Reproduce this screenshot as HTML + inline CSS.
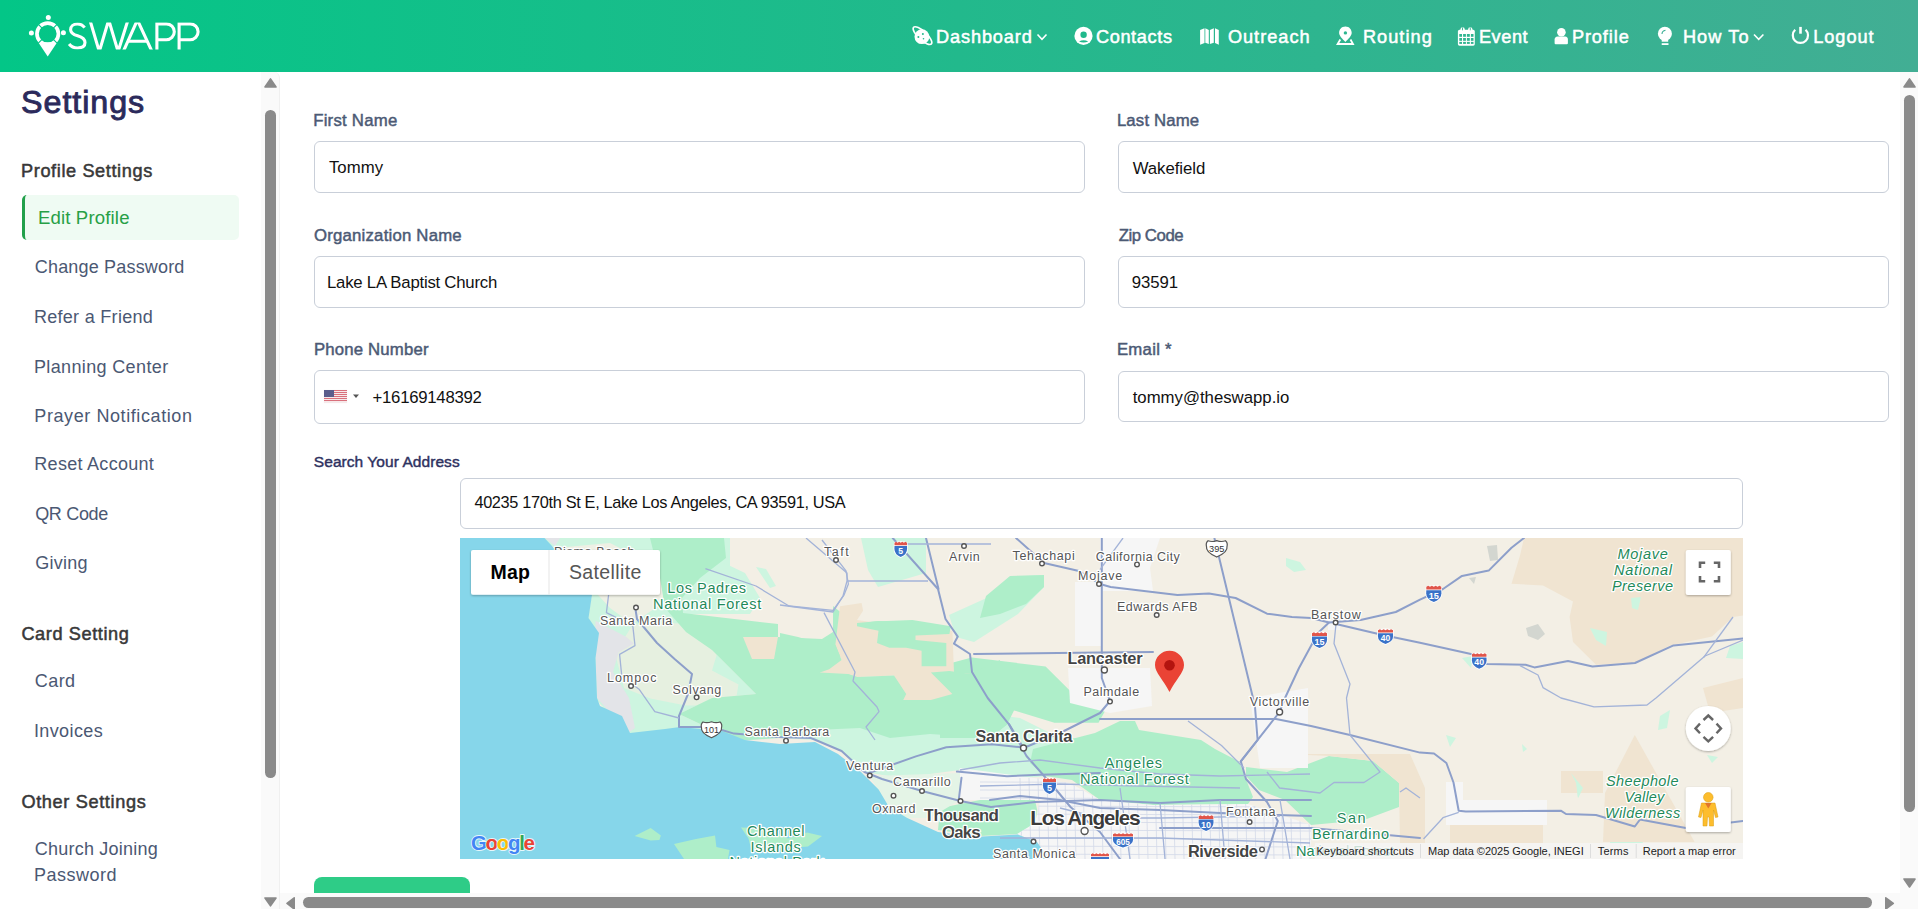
<!DOCTYPE html>
<html><head><meta charset="utf-8">
<style>
*{margin:0;padding:0;box-sizing:border-box}
html,body{width:1918px;height:909px;overflow:hidden;background:#fff;font-family:"Liberation Sans",sans-serif}
.a{position:absolute}
.t{position:absolute;white-space:nowrap;line-height:1}
.inp{position:absolute;border:1px solid #c9cfd9;border-radius:6px;background:#fff}
</style></head><body>
<div class="a" style="left:0;top:0;width:1918px;height:72px;background:linear-gradient(90deg,#03c687 0%,#22b98c 50%,#42ae94 100%)"></div>
<!--LOGO-->
<svg class="a" style="left:0;top:0" width="1918" height="72" viewBox="0 0 1918 72">
<g fill="#fff">
<!-- logo -->
<circle cx="48.3" cy="17.5" r="2.5"/>
<circle cx="31.4" cy="33" r="2.5"/>
<circle cx="63.4" cy="32.8" r="2.5"/>
<path d="M38.2,42.2 L57.2,42.2 L47.7,56.4 Z"/>
<circle cx="47.7" cy="33.8" r="10.75" fill="none" stroke="#fff" stroke-width="3.7"/>
<path d="M41.83,27.93 L38.30,24.40 M53.57,27.93 L57.10,24.40 M53.57,39.67 L57.10,43.20 M41.83,39.67 L38.30,43.20" stroke="#05c588" stroke-width="1.1"/>
<defs><clipPath id="lgc"><rect x="60" y="22.4" width="150" height="27.2"/></clipPath></defs>
<g clip-path="url(#lgc)" fill="none" stroke="#fff" stroke-width="3.1" stroke-linejoin="miter">
<path d="M84.6,27.6 C82.8,25 80.2,24 77.3,24 C73.2,24 70.6,26.4 70.6,29.7 C70.6,33.2 73.6,34.6 77.6,35.8 C82,37.1 85,39 85,42.6 C85,46.1 82,48 77.6,48 C74.1,48 71.1,46.6 69.1,44"/>
<path d="M89.9,20 L99.3,51.5 L108.7,20 L118.1,51.5 L128,20"/>
<path d="M123.3,51.5 L137.4,20 L152,51.5"/>
<path d="M128.3,41.3 H146.7"/>
<path d="M156.9,51.5 V23.9 H166.4 A7.9,7.9 0 0 1 166.4,39.7 H156.9"/>
<path d="M179.1,51.5 V23.9 H190.2 A7.9,7.9 0 0 1 190.2,39.7 H179.1"/>
</g>
<!-- dashboard -->
<circle cx="921.9" cy="36.7" r="7.4"/>
<ellipse cx="922.5" cy="35.6" rx="12.2" ry="4.2" transform="rotate(43 922.5 35.6)" fill="none" stroke="#fff" stroke-width="1.6"/>
<circle cx="922.9" cy="34" r="1" fill="#22b98c"/><circle cx="918.4" cy="36.9" r="1" fill="#22b98c"/><circle cx="923.5" cy="38.8" r="0.8" fill="#22b98c"/>
<path d="M1037.5,34.5 L1042,39.3 L1046.5,34.5" fill="none" stroke="#fff" stroke-width="1.6"/>
<!-- contacts -->
<circle cx="1083.5" cy="35.9" r="9.1"/>
<circle cx="1083.6" cy="34.8" r="3.2" fill="#20b98c"/>
<path d="M1079,41.5 Q1083.6,38.8 1088.2,41.5 Q1083.6,43.6 1079,41.5 Z" fill="#20b98c"/>
<!-- outreach -->
<polygon points="1200.1,30 1204.5,28.2 1204.5,43 1200.1,44.8"/>
<polygon points="1205.3,28.2 1208.8,30 1208.8,44 1205.3,42.8"/>
<polygon points="1209.9,30 1213.8,28.2 1213.8,42.8 1209.9,44"/>
<polygon points="1215,28.2 1218.8,30 1218.8,44.8 1215,43"/>
<!-- routing -->
<path d="M1345.4,26.5 C1341.5,26.5 1339.1,29.5 1339.1,32.8 C1339.1,36 1342.5,39 1345.4,42 C1348.3,39 1351.7,36 1351.7,32.8 C1351.7,29.5 1349.3,26.5 1345.4,26.5 Z"/>
<circle cx="1345.4" cy="32.9" r="1.7" fill="#2db68f"/>
<path d="M1340.3,39.5 L1337.6,44 L1353,44 L1350.5,39.5" fill="none" stroke="#fff" stroke-width="1.8"/>
<!-- event -->
<rect x="1457.9" y="29.8" width="16.9" height="15.9" rx="1.6"/>
<circle cx="1462.6" cy="29.4" r="2.2"/><circle cx="1470.3" cy="29.4" r="2.2"/>
<rect x="1462.1" y="27.5" width="0.9" height="2.8" fill="#30b591"/><rect x="1469.8" y="27.5" width="0.9" height="2.8" fill="#30b591"/>
<g fill="#30b591">
<rect x="1459.3" y="34" width="2.7" height="2.8"/><rect x="1463.1" y="34" width="2.8" height="2.8"/><rect x="1466.9" y="34" width="2.9" height="2.8"/><rect x="1470.9" y="34" width="2.6" height="2.8"/>
<rect x="1459.3" y="38" width="2.7" height="2.8"/><rect x="1463.1" y="38" width="2.8" height="2.8"/><rect x="1466.9" y="38" width="2.9" height="2.8"/><rect x="1470.9" y="38" width="2.6" height="2.8"/>
<rect x="1459.3" y="41.9" width="2.7" height="2"/><rect x="1463.1" y="41.9" width="2.8" height="2"/><rect x="1466.9" y="41.9" width="2.9" height="2"/><rect x="1470.9" y="41.9" width="2.6" height="2"/>
</g>
<!-- profile -->
<circle cx="1561.4" cy="32.2" r="4.3"/>
<path d="M1557.6,36.4 L1565.2,36.4 Q1567.9,36.6 1567.9,39.5 L1567.9,43.2 Q1567.9,44.3 1566.8,44.3 L1555.7,44.3 Q1554.6,44.3 1554.6,43.2 L1554.6,39.5 Q1554.6,36.6 1557.6,36.4 Z"/>
<!-- how to -->
<circle cx="1664.9" cy="33.8" r="7"/>
<rect x="1661.7" y="38.5" width="6.5" height="3.2"/>
<rect x="1661.7" y="43.2" width="6.8" height="1.8"/>
<path d="M1662,34 Q1662,31 1665.5,30.3" fill="none" stroke="#3aae94" stroke-width="1.1"/>
<path d="M1754,34.5 L1758.7,39.3 L1763.4,34.5" fill="none" stroke="#fff" stroke-width="1.6"/>
<!-- logout -->
<path d="M1795.2,29.8 A7.6,7.6 0 1 0 1805.6,29.8" fill="none" stroke="#fff" stroke-width="2.2"/>
<rect x="1799.2" y="26.9" width="2.6" height="6.8"/>
</g>
</svg>


<!-- sidebar -->
<div class="a" style="left:22px;top:195px;width:217px;height:45px;background:#effbf3;border-left:3px solid #22a04b;border-radius:5px"></div>
<div class="a" style="left:260.8px;top:72px;width:19.2px;height:837px;background:#fafafa;border-right:1.4px solid #f0f0f0;border-top-right-radius:6px"></div>

<!-- form -->
<div class="inp" style="left:314px;top:141px;width:771px;height:52px"></div>
<div class="inp" style="left:1118px;top:141px;width:771px;height:52px"></div>
<div class="inp" style="left:314px;top:256px;width:771px;height:52px"></div>
<div class="inp" style="left:1118px;top:256px;width:771px;height:52px"></div>
<div class="inp" style="left:314px;top:370px;width:771px;height:54px"></div>
<div class="inp" style="left:1118px;top:371px;width:771px;height:51px"></div>
<div class="inp" style="left:460px;top:478px;width:1283px;height:51px"></div>
<div class="a" style="left:323.5px;top:390.4px;width:23.5px;height:12.5px;background:repeating-linear-gradient(180deg,#d9707c 0px,#d9707c 0.96px,#f6e9ea 0.96px,#f6e9ea 1.92px);box-shadow:0 0 0.5px rgba(0,0,0,.3)"></div>
<div class="a" style="left:323.5px;top:390.4px;width:10.5px;height:6.7px;background:#5a5d8c"></div>
<svg class="a" style="left:352px;top:393px" width="8" height="7"><polygon points="1,1.5 7,1.5 4,5" fill="#555"/></svg>
<div class="t" style="left:935.9px;top:27.6px;font-size:18.16px;-webkit-text-stroke:0.51px #fff;letter-spacing:0.90px;color:#fff">Dashboard</div>
<div class="t" style="left:1095.9px;top:27.6px;font-size:18.16px;-webkit-text-stroke:0.51px #fff;letter-spacing:0.64px;color:#fff">Contacts</div>
<div class="t" style="left:1227.9px;top:27.6px;font-size:18.16px;-webkit-text-stroke:0.51px #fff;letter-spacing:1.00px;color:#fff">Outreach</div>
<div class="t" style="left:1362.9px;top:27.6px;font-size:18.16px;-webkit-text-stroke:0.51px #fff;letter-spacing:1.05px;color:#fff">Routing</div>
<div class="t" style="left:1478.9px;top:27.6px;font-size:18.16px;-webkit-text-stroke:0.51px #fff;letter-spacing:0.58px;color:#fff">Event</div>
<div class="t" style="left:1571.9px;top:27.6px;font-size:18.16px;-webkit-text-stroke:0.51px #fff;letter-spacing:0.90px;color:#fff">Profile</div>
<div class="t" style="left:1682.9px;top:27.6px;font-size:18.16px;-webkit-text-stroke:0.51px #fff;letter-spacing:1.08px;color:#fff">How To</div>
<div class="t" style="left:1813.2px;top:27.6px;font-size:18.16px;-webkit-text-stroke:0.51px #fff;letter-spacing:0.97px;color:#fff">Logout</div>
<div class="t" style="left:21.1px;top:85.9px;font-size:32.26px;-webkit-text-stroke:0.90px #2b2a5b;letter-spacing:0.93px;color:#2b2a5b">Settings</div>
<div class="t" style="left:21.0px;top:161.6px;font-size:18.16px;-webkit-text-stroke:0.51px #383838;letter-spacing:0.61px;color:#383838">Profile Settings</div>
<div class="t" style="left:37.9px;top:209.3px;font-size:18.58px;letter-spacing:0.16px;color:#27a046">Edit Profile</div>
<div class="t" style="left:34.8px;top:258.2px;font-size:18.02px;letter-spacing:0.17px;color:#4b5873">Change Password</div>
<div class="t" style="left:33.9px;top:308.2px;font-size:18.02px;letter-spacing:0.29px;color:#4b5873">Refer a Friend</div>
<div class="t" style="left:33.9px;top:357.6px;font-size:18.02px;letter-spacing:0.36px;color:#4b5873">Planning Center</div>
<div class="t" style="left:34.3px;top:406.7px;font-size:18.02px;letter-spacing:0.58px;color:#4b5873">Prayer Notification</div>
<div class="t" style="left:34.3px;top:455.0px;font-size:18.02px;letter-spacing:0.28px;color:#4b5873">Reset Account</div>
<div class="t" style="left:35.2px;top:504.5px;font-size:18.02px;letter-spacing:-0.33px;color:#4b5873">QR Code</div>
<div class="t" style="left:35.2px;top:554.0px;font-size:18.02px;letter-spacing:0.25px;color:#4b5873">Giving</div>
<div class="t" style="left:21.4px;top:624.6px;font-size:18.16px;-webkit-text-stroke:0.51px #383838;letter-spacing:0.59px;color:#383838">Card Setting</div>
<div class="t" style="left:34.8px;top:671.9px;font-size:18.02px;letter-spacing:0.42px;color:#4b5873">Card</div>
<div class="t" style="left:33.9px;top:721.9px;font-size:18.02px;letter-spacing:0.39px;color:#4b5873">Invoices</div>
<div class="t" style="left:21.4px;top:792.7px;font-size:18.16px;-webkit-text-stroke:0.51px #383838;letter-spacing:0.64px;color:#383838">Other Settings</div>
<div class="t" style="left:34.8px;top:839.9px;font-size:18.02px;letter-spacing:0.21px;color:#4b5873">Church Joining</div>
<div class="t" style="left:33.9px;top:865.9px;font-size:18.02px;letter-spacing:0.51px;color:#4b5873">Password</div>
<div class="t" style="left:313.2px;top:113.0px;font-size:16.76px;-webkit-text-stroke:0.47px #4c5a75;letter-spacing:0.24px;color:#4c5a75">First Name</div>
<div class="t" style="left:1116.9px;top:113.0px;font-size:16.76px;-webkit-text-stroke:0.47px #4c5a75;letter-spacing:0.16px;color:#4c5a75">Last Name</div>
<div class="t" style="left:314.0px;top:227.5px;font-size:16.76px;-webkit-text-stroke:0.47px #4c5a75;letter-spacing:0.21px;color:#4c5a75">Organization Name</div>
<div class="t" style="left:1118.7px;top:227.5px;font-size:16.76px;-webkit-text-stroke:0.47px #4c5a75;letter-spacing:-0.44px;color:#4c5a75">Zip Code</div>
<div class="t" style="left:313.9px;top:341.7px;font-size:16.76px;-webkit-text-stroke:0.47px #4c5a75;letter-spacing:0.18px;color:#4c5a75">Phone Number</div>
<div class="t" style="left:1116.9px;top:341.7px;font-size:16.76px;-webkit-text-stroke:0.47px #4c5a75;letter-spacing:0.27px;color:#4c5a75">Email *</div>
<div class="t" style="left:313.8px;top:454.0px;font-size:15.5px;-webkit-text-stroke:0.43px #2e3160;letter-spacing:0.06px;color:#2e3160">Search Your Address</div>
<div class="t" style="left:328.9px;top:160.1px;font-size:16.76px;letter-spacing:0.09px;color:#111">Tommy</div>
<div class="t" style="left:1132.7px;top:161.0px;font-size:16.76px;letter-spacing:-0.05px;color:#111">Wakefield</div>
<div class="t" style="left:327.0px;top:274.7px;font-size:16.76px;letter-spacing:-0.23px;color:#111">Lake LA Baptist Church</div>
<div class="t" style="left:1131.8px;top:275.3px;font-size:16.76px;letter-spacing:-0.09px;color:#111">93591</div>
<div class="t" style="left:372.5px;top:390.2px;font-size:16.76px;letter-spacing:-0.26px;color:#111">+16169148392</div>
<div class="t" style="left:1132.7px;top:389.5px;font-size:16.76px;letter-spacing:0.00px;color:#111">tommy@theswapp.io</div>
<div class="t" style="left:474.4px;top:494.4px;font-size:16.34px;letter-spacing:-0.34px;color:#111">40235 170th St E, Lake Los Angeles, CA 93591, USA</div>
<svg class="a" style="left:460px;top:538px" width="1283" height="321" viewBox="0 0 1283 321">
<rect width="1283" height="321" fill="#f3efe5"/>
<!-- light green coastal -->
<g fill="#cdf5e0">
<polygon points="80,0 270,0 270,30 240,55 222,75 252,112 274,134 296,156 252,160 219,176 274,202 170,200 135,160 135,120 139,95 128,80 132,57 95,10"/>
<polygon points="401,0 466,0 466,35 418,49 408,32"/>
<polygon points="201,40 264,25 285,35 300,60 290,76 223,76"/>
<polygon points="296,29 306,31 316,48 310,50"/>
<polygon points="489,77 531,58 549,39 584,37 584,49 558,76 514,104 496,99"/>
<polygon points="320,200 360,180 420,175 480,170 560,180 600,200 640,200 640,235 560,240 500,232 440,240 405,234 380,213 355,202"/>
<polygon points="826,20 840,24 846,32 834,34 826,28"/>
<polygon points="1130,90 1147,94 1146,108 1136,102"/>
<polygon points="1171,60 1181,59 1178,72 1172,70"/>
<polygon points="1165,115 1173,118 1170,123"/>
<polygon points="1002,120 1013,118 1011,130"/>
<polygon points="1270,108 1283,104 1283,121 1266,120"/>
<polygon points="1200,178 1210,172 1207,190 1198,192"/>
<polygon points="1247,217 1258,219 1252,225"/>
<polygon points="1111,235 1123,250 1118,260 1116,245"/>
<polygon points="986,197 996,200 990,209"/>
<polygon points="1062,206 1067,211 1063,214"/>
<polygon points="1153,290 1180,300 1183,305 1150,305"/>
</g>
<polygon fill="#e6f0e0" points="172.8,86.6 229,85 261,102.5 252,132.4 278.5,146.5 275,167.6 225.6,167.6 190.4,160.6 164,150 155,115"/>
<polygon fill="#eef0e4" points="95,10 150,5 200,30 210,60 172,86 150,70"/>
<!-- forest -->
<g fill="#aeeec9">
<polygon points="190,0 264,0 266,20 240,40 222,60 223,75 300,84 318,86 318,99 362,101 373,94 373,68 395,86 418,83 457,85 489,92 492,99 487,113 486,123 463,127 461,114 419,113 417,99 396,88 397,100 380,119 362,132 395,136 417,156 466,134 500,128 511.7,119.6 585.6,128.4 620.8,163.6 647.3,169 638.5,184.7 594.4,184.7 554,172.4 547,186.5 530,200 470,196 430,200 400,190 355,192 320,200 290,202 274,202 219,176 252,160 296,156 274,134 252,112 226,94 205,70 200,40"/>
<polygon points="320,95 338,99 362,106 380,113 362,134 378,160 320,160"/>
<polygon points="573,211 635,195 660,183 675,183 679,192 741,202 755,211 779,223.5 793,259 788,266 693,267 640,262 612,242 585,238 570,225"/>
<polygon points="480,128 511.7,119.6 524,165.4 547,186.5 530,200 480,200"/>
<polygon points="526,58 550,38 584,37 584,49 566,66 540,76 520,80"/>
<polygon points="786,229 827,234 869,218 913,223 939,245 939,269 904,282 851,287 825,262 799,252 786,238"/>
<polygon points="480,270 520,262 575,262 580,285 560,296 520,298 478,292"/>
<polygon points="174.6,298 190.7,290 200.9,297.5 199.4,302 190.7,302.6"/>
<polygon points="214,306 236,301 255,297.5 256.4,309 269.5,312 268,321 224,321"/>
<polygon points="281,289.4 306,290 328,300.4 347,294.6 362,298 348,308.4 328,310 291.4,312 288.5,300.4"/>
</g>
<!-- tan -->
<g fill="#f0e4d1">
<polygon points="380,68.2 401.6,65.1 403.1,72.8 397,82 418.5,85.1 492.4,92.8 494,134.4 510.9,136 492.4,165.2 443.2,168.3 434,137.5 397,139 387.7,136 360,134.4 360,128.2 381.6,122 375.4,106.7"/>
<polygon points="283,99 318,99 314,121 292,121"/>
<polygon points="1064,0 1283,0 1283,77.5 1273,79 1252,98.6 1210,107.4 1175,125 1136,126.8 1113,104 1109.6,79 1113,63.4 1083,47.5 1051.5,45.8 1060,17.6"/>
<polygon points="1174.8,197 1234.6,304 1143,304 1145,255"/>
<polygon points="1101,233 1143,233 1143,255 1101,255"/>
<polygon points="990,276 1083,276 1083,305 990,305"/>
<polygon points="826,216 950,216 965,250 965,305 940,305 939,245 913,223 869,218"/>
<polygon points="1243,150 1283,140 1283,170 1250,175"/>
</g>
<g fill="#aeeec9">
<polygon points="397,85.1 413.9,83.6 452.4,82 490.9,88.2 489.4,95.9 455.5,97.4 455.5,102 486.3,105.1 486.3,128.2 461.6,128.2 461.6,112.8 446.2,109.8 429.3,109.8 417,105.1 418.5,92.8 397,88.2"/>
<polygon points="360,103.6 375.4,106.7 381.6,122 369.2,131.3 360,134.4"/>
<polygon points="360,140.6 387.7,136 397,139 434,137.5 446.2,156 443.2,162 470.9,162 492.4,156 470.9,134.4 489.4,132.9 510.9,136 540,122 540,182 360,182"/>
</g>
<g fill="#cdf5e0">
<polygon points="1130,90 1147,94 1146,108 1136,102"/>
<polygon points="1171,60 1181,59 1178,72 1172,70"/>
<polygon points="1111,235 1123,250 1118,260 1116,245"/>
</g>
<!-- urban -->
<g fill="#f6f6f6">
<polygon points="615,44 642,44 642,108 615,108"/>
<polygon points="608,130 690,130 692,168 650,175 610,165"/>
<polygon points="640,0 700,0 690,30 693,53 640,53"/>
<polygon points="790,160 848,150 848,230 800,230"/>
<polygon points="500,230 560,238 610,245 640,262 693,267 788,266 851,287 851,321 589,321 577,304 557,296 575,285 580,262 520,262 487,262"/>
<polygon fill="#e4f4e6" points="410,238 500,235 500,262 470,280 446,280 429,269 418,252"/>
<polygon points="986,244 1003,244 1003,262 1087,262 1087,287 986,287"/>
<polygon points="868,82 880,82 880,92 868,92"/>
</g>
<clipPath id="lac"><polygon points="500,230 560,238 610,245 640,262 693,267 788,266 851,287 851,321 589,321 577,304 557,296 575,285 580,262 520,262 487,262"/></clipPath>
<path clip-path="url(#lac)" d="M560,240 L562,321 M569,240 L571,321 M578,240 L580,321 M587,240 L589,321 M596,240 L598,321 M605,240 L607,321 M614,240 L616,321 M623,240 L625,321 M632,240 L634,321 M641,240 L643,321 M650,240 L652,321 M659,240 L661,321 M668,240 L670,321 M677,240 L679,321 M686,240 L688,321 M695,240 L697,321 M704,240 L706,321 M713,240 L715,321 M722,240 L724,321 M731,240 L733,321 M740,240 L742,321 M749,240 L751,321 M758,240 L760,321 M767,240 L769,321 M776,240 L778,321 M785,240 L787,321 M794,240 L796,321 M803,240 L805,321 M812,240 L814,321 M821,240 L823,321 M830,240 L832,321 M839,240 L841,321 M848,240 L850,321 M520,244 L851,245 M520,252 L851,253 M520,260 L851,261 M520,268 L851,269 M520,276 L851,277 M520,284 L851,285 M520,292 L851,293 M520,300 L851,301 M520,308 L851,309 M520,316 L851,317" stroke="#d3d9e8" stroke-width="0.8" fill="none"/>
<!-- military gray -->
<polygon fill="#e3e4e8" points="85,0 100,0 95,8"/>
<polygon fill="#e3e4e8" points="135.5,82.7 165.5,98.6 174,105.6 158.5,114.4 153,134 169,160 175,190 168,195 137,160 135.5,120"/>
<polygon fill="#d3d6d0" points="1027,8 1037,7 1038,22 1030,23"/>
<polygon fill="#d3d6d0" points="1066,90 1078,86 1085,96 1078,102 1068,98"/>
<polygon fill="#d3d6d0" points="1009,40 1016,39 1014,46"/>
<!-- ocean -->
<polygon fill="#86d6ea" points="0,0 84.5,0 92,8 110,30 132,57 128.5,80 139,95 135.5,120 137,160 140,168 162,178 170,195 205,191 220,189 262,193 285,202 320,206 355,204 378,216 401,234 418.6,251.5 429,269 446.8,279.7 478,294 513.7,299 557.7,296.4 577,304 589,321 0,321"/>
<!-- islands -->
<g fill="#aeeec9">
<polygon points="174.6,298 190.7,290 200.9,297.5 199.4,302 190.7,302.6"/>
<polygon points="214,306 236,301 255,297.5 256.4,309 269.5,312 268,321 224,321"/>
<polygon points="281,289.4 306,290 328,300.4 347,294.6 362,298 348,308.4 328,310 291.4,312 288.5,300.4"/>
</g>
<!-- roads -->
<g fill="none" stroke="#8d9fca" stroke-width="2" stroke-linejoin="round" stroke-linecap="round">
<polyline points="175,68 177,81 197,105 214.6,121 232,136 228,156 219,178 219,189 252,189 274,195.6 318,199 351,200 381.6,213 404.5,234 422,241 462,253 500.5,263 531,269 575,264 640,262 700,265 760,262 851,262"/>
<polyline points="432.7,0 478,51 485.5,81 497.8,98.6 494,105.6 510,116 512,134 527.7,160 549,186.4 566.5,218 580.6,234 593,248 610.5,269 640,294 660,321"/>
<polyline points="466,0 478.5,51"/>
<polyline points="556,0 584,25 619,33 640,46 650.6,49 717.5,57 749,55.5 775.6,60 807,75.7 832,79 851,80 869,84.5 900.6,82 935.8,74 960,61.6 983,51 1002,37.9 1028.7,32.6 1051.5,9.7 1064,0"/>
<polyline points="641.8,0 641.8,140 650,163 640,175 600,195 563.5,210 549,186"/>
<polyline points="754.4,0 793,160 795,169 797.6,202 780.8,223.4"/>
<polyline points="869,84.5 858,95 839,130 825,160 819.6,174 780.8,223.4 786,241 807,264 817.8,283 805.5,321"/>
<polyline points="876,86 921.7,96.8 960,104.8 1011,116 1027,126 1065.6,126.8 1074.4,129.4 1108,123 1132.5,128.5 1175,125 1213.5,107.4 1283,100.4"/>
<polyline points="640,181 752.7,181 816,181 851,188 890,197 960,214.6 974,215.5 986.4,225 993.5,244.5 998.7,272.7 1005.8,273.6 1100.8,272.7 1106,276 1136,277 1174.8,288.5 1180,281.5 1225.8,290 1283,283"/>
<polyline points="514,116 640,114.5 693,114"/>
<polyline points="408.9,235 455.9,218.4 486.3,209.3 531.9,206.3 562.2,209.3"/>
<polyline points="496.9,233.6 547,238.2 580,236.7 640,235"/>
<polyline points="501.5,239.7 498.5,264"/>
<polyline points="530,262 560,258 600,262 640,270 700,272 760,275 851,278"/>

<polyline points="700,290 851,290 960,300"/>
</g>
<g fill="none" stroke="#a3b3d8" stroke-width="1.3" stroke-linejoin="round">
<polyline points="148.6,57 146.4,74.6 172.8,87.8 175,107.6 159.6,116.4 161.8,138.4 179.4,151.6 194.8,173.6 219,180"/>
<polyline points="245.4,30.6 296,48 329,68 373,72.4 384,57 388.4,46 386,32.8 362,2"/>
<polyline points="346,0 387,35 387,43 383,58 373,74 320,67"/>
<polyline points="364,74.6 395,134 393,143 417,169 419,173.6 406,189 415,202"/>
<polyline points="387,43 468,43"/>
<polyline points="443,6 531,6"/>
<polyline points="876,86 874,105.6 890,146 886.5,160 890,197 920,234 904,244.5 874,244.5 860,255 819.6,250 807,234"/>
<polyline points="728,183 761.5,207.5 784,230"/>
<polyline points="1060,127.6 1078,137 1083,149.6 1101,160 1134,168.8 1187,167 1196,160 1245,118 1283,102"/>
<polyline points="1243.5,119.7 1273,79"/>
<polyline points="963.5,301 983,279.7 998.7,274.4"/>
<polyline points="663,0 640,31.7"/>
<polyline points="500,232 540,225 580,222 640,230 700,236 760,238 850,236"/>
<polyline points="520,248 600,246 680,248 780,250"/>
<polyline points="540,300 700,300 850,305"/>
<polyline points="600,270 640,280 700,280 820,278"/>
<polyline points="700,265 705,321"/>
<polyline points="760,262 765,321"/>
<polyline points="660,250 670,321"/>
<polyline points="820,262 830,321"/>
<polyline points="940,254 946,250 960,260"/>
</g>
<g font-family="Liberation Sans, sans-serif" stroke="#fff" stroke-width="2.5" stroke-linejoin="round" paint-order="stroke">
<text x="94.0" y="18.0" font-size="12.5" fill="#555" textLength="80.4" lengthAdjust="spacing">Pismo Beach</text>
<text x="364.0" y="18.0" font-size="12.5" fill="#555" textLength="24.8" lengthAdjust="spacing">Taft</text>
<text x="489.0" y="23.0" font-size="12.5" fill="#555" textLength="30.8" lengthAdjust="spacing">Arvin</text>
<text x="552.6" y="22.0" font-size="12.5" fill="#555" textLength="62.1" lengthAdjust="spacing">Tehachapi</text>
<text x="635.8" y="23.0" font-size="12.5" fill="#555" textLength="84.0" lengthAdjust="spacing">California City</text>
<text x="618.0" y="42.0" font-size="12.5" fill="#555" textLength="44.1" lengthAdjust="spacing">Mojave</text>
<text x="657.0" y="72.6" font-size="12.5" fill="#555" textLength="80.5" lengthAdjust="spacing">Edwards AFB</text>
<text x="851.0" y="80.7" font-size="12.5" fill="#555" textLength="49.8" lengthAdjust="spacing">Barstow</text>
<text x="607.5" y="125.7" font-size="16.5" fill="#444" font-weight="bold" textLength="75.1" lengthAdjust="spacing">Lancaster</text>
<text x="623.4" y="157.6" font-size="12.5" fill="#555" textLength="55.7" lengthAdjust="spacing">Palmdale</text>
<text x="789.8" y="168.0" font-size="12.5" fill="#555" textLength="59.3" lengthAdjust="spacing">Victorville</text>
<text x="515.4" y="203.6" font-size="16.5" fill="#444" font-weight="bold" textLength="97.1" lengthAdjust="spacing">Santa Clarita</text>
<text x="644.7" y="230.0" font-size="14.5" fill="#1f8a5a" textLength="57.4" lengthAdjust="spacing">Angeles</text>
<text x="619.9" y="246.0" font-size="14.5" fill="#1f8a5a" textLength="108.8" lengthAdjust="spacing">National Forest</text>
<text x="570.3" y="287.0" font-size="21" fill="#3b3b3b" font-weight="bold" textLength="110.5" lengthAdjust="spacing">Los Angeles</text>
<text x="766.0" y="278.0" font-size="12.5" fill="#555" textLength="49.4" lengthAdjust="spacing">Fontana</text>
<text x="876.8" y="285.0" font-size="14.5" fill="#1f8a5a" textLength="28.8" lengthAdjust="spacing">San</text>
<text x="852.0" y="301.0" font-size="14.5" fill="#1f8a5a" textLength="77.0" lengthAdjust="spacing">Bernardino</text>
<text x="836.0" y="318.0" font-size="14.5" fill="#1f8a5a">National Forest</text>
<text x="533.0" y="320.0" font-size="12.5" fill="#555" textLength="82.4" lengthAdjust="spacing">Santa Monica</text>
<text x="728.0" y="318.7" font-size="16.5" fill="#444" font-weight="bold" textLength="69.9" lengthAdjust="spacing">Riverside</text>
<text x="207.3" y="55.0" font-size="14.5" fill="#1f8a5a" textLength="78.8" lengthAdjust="spacing">Los Padres</text>
<text x="193.0" y="71.0" font-size="14.5" fill="#1f8a5a" textLength="108.3" lengthAdjust="spacing">National Forest</text>
<text x="140.0" y="87.0" font-size="12.5" fill="#555" textLength="72.3" lengthAdjust="spacing">Santa Maria</text>
<text x="147.0" y="143.5" font-size="12.5" fill="#555" textLength="49.4" lengthAdjust="spacing">Lompoc</text>
<text x="212.6" y="156.0" font-size="12.5" fill="#555" textLength="48.7" lengthAdjust="spacing">Solvang</text>
<text x="284.6" y="197.7" font-size="12.5" fill="#555" textLength="84.7" lengthAdjust="spacing">Santa Barbara</text>
<text x="386.0" y="232.0" font-size="12.5" fill="#555" textLength="47.1" lengthAdjust="spacing">Ventura</text>
<text x="433.0" y="248.0" font-size="12.5" fill="#555" textLength="57.8" lengthAdjust="spacing">Camarillo</text>
<text x="412.0" y="274.6" font-size="12.5" fill="#555" textLength="43.4" lengthAdjust="spacing">Oxnard</text>
<text x="464.0" y="283.0" font-size="17" fill="#444" font-weight="bold" textLength="74.8" lengthAdjust="spacing">Thousand</text>
<text x="482.0" y="300.0" font-size="17" fill="#444" font-weight="bold" textLength="38.8" lengthAdjust="spacing">Oaks</text>
<text x="287.0" y="297.6" font-size="14.5" fill="#1f8a5a" textLength="57.5" lengthAdjust="spacing">Channel</text>
<text x="290.6" y="313.6" font-size="14.5" fill="#1f8a5a" textLength="50.2" lengthAdjust="spacing">Islands</text>
<text x="269.5" y="329.0" font-size="14.5" fill="#1f8a5a" textLength="94.3" lengthAdjust="spacing">National Park</text>
<text x="1157.4" y="21.0" font-size="14.5" fill="#1f8a5a" font-style="italic" textLength="50.4" lengthAdjust="spacing">Mojave</text>
<text x="1154.0" y="37.0" font-size="14.5" fill="#1f8a5a" font-style="italic" textLength="58.1" lengthAdjust="spacing">National</text>
<text x="1152.0" y="53.0" font-size="14.5" fill="#1f8a5a" font-style="italic" textLength="61.1" lengthAdjust="spacing">Preserve</text>
<text x="1146.0" y="248.0" font-size="14.5" fill="#1f8a5a" font-style="italic" textLength="72.5" lengthAdjust="spacing">Sheephole</text>
<text x="1164.5" y="264.0" font-size="14.5" fill="#1f8a5a" font-style="italic" textLength="39.8" lengthAdjust="spacing">Valley</text>
<text x="1145.0" y="280.0" font-size="14.5" fill="#1f8a5a" font-style="italic" textLength="75.2" lengthAdjust="spacing">Wilderness</text>
</g>
<g fill="#fff" stroke="#555" stroke-width="1.4">
<circle cx="376" cy="22" r="2.3"/>
<circle cx="504" cy="8" r="2.3"/>
<circle cx="582" cy="25.5" r="2.3"/>
<circle cx="677" cy="26.4" r="2.3"/>
<circle cx="639" cy="46" r="2.3"/>
<circle cx="696.7" cy="77" r="2.3"/>
<circle cx="875.6" cy="84.5" r="2.3"/>
<circle cx="644.4" cy="132" r="3"/>
<circle cx="650" cy="163.6" r="2.3"/>
<circle cx="819.6" cy="174" r="3"/>
<circle cx="563.5" cy="210" r="3"/>
<circle cx="624.6" cy="293" r="3.5"/>
<circle cx="573.5" cy="303.5" r="2.3"/>
<circle cx="789.6" cy="284" r="2.3"/>
<circle cx="802" cy="311.4" r="2.3"/>
<circle cx="176" cy="69.5" r="2.3"/>
<circle cx="171" cy="148" r="2.3"/>
<circle cx="236.6" cy="159.3" r="2.3"/>
<circle cx="326" cy="202.7" r="2.3"/>
<circle cx="409.8" cy="237.5" r="2.3"/>
<circle cx="462" cy="253" r="2.3"/>
<circle cx="433.5" cy="257.7" r="2.3"/>
<circle cx="500.5" cy="263" r="2.3"/>
</g>
<!-- interstate shields -->
<g><path d="M434.1,4.2 Q440.7,2.2 447.4,4.2 L448.0,10.4 Q448.0,16.9 440.7,20.0 Q433.5,16.9 433.5,10.4 Z" fill="#fff"/><polygon points="434.5,4.8 436.1,3.8 437.6,4.8 439.2,3.8 440.7,4.8 442.3,3.8 443.9,4.8 445.4,3.8 447.0,4.8 447.0,7.3 434.5,7.3" fill="#e0554a"/><path d="M434.5,8.0 L447.0,8.0 L447.1,10.8 Q447.1,16.5 440.7,19.0 Q434.4,16.5 434.4,10.8 Z" fill="#3a72c8"/><text x="440.7" y="15.8" font-size="8.7" font-weight="bold" fill="#fff" text-anchor="middle" font-family="Liberation Sans, sans-serif">5</text></g>
<g transform="translate(745,1.8) scale(1.022,1.000)"><path d="M3,1 Q7,2.5 11.5,0.8 Q16,2.5 20,1 Q22.5,3 21.5,7 Q22.5,12 11.5,17.2 Q0.5,12 1.5,7 Q0.5,3 3,1 Z" fill="#fff" stroke="#555" stroke-width="1.2"/><text x="11.5" y="12.3" font-size="9" fill="#333" text-anchor="middle" font-family="Liberation Sans, sans-serif">395</text></g>
<g><path d="M851.6,94.6 Q859.5,92.6 867.4,94.6 L868.0,101.1 Q868.0,107.8 859.5,111.0 Q851.0,107.8 851.0,101.1 Z" fill="#fff"/><polygon points="852.0,95.2 853.9,94.2 855.7,95.2 857.6,94.2 859.5,95.2 861.4,94.2 863.2,95.2 865.1,94.2 867.0,95.2 867.0,97.9 852.0,97.9" fill="#e0554a"/><path d="M852.0,98.6 L867.0,98.6 L867.1,101.5 Q867.1,107.4 859.5,110.0 Q851.9,107.4 851.9,101.5 Z" fill="#3a72c8"/><text x="859.5" y="106.7" font-size="9.0" font-weight="bold" fill="#fff" text-anchor="middle" font-family="Liberation Sans, sans-serif">15</text></g>
<g><path d="M917.6,91.6 Q925.5,89.6 933.4,91.6 L934.0,97.6 Q934.0,103.9 925.5,107.0 Q917.0,103.9 917.0,97.6 Z" fill="#fff"/><polygon points="918.0,92.2 919.9,91.2 921.7,92.2 923.6,91.2 925.5,92.2 927.4,91.2 929.2,92.2 931.1,91.2 933.0,92.2 933.0,94.6 918.0,94.6" fill="#e0554a"/><path d="M918.0,95.3 L933.0,95.3 L933.1,98.0 Q933.1,103.6 925.5,106.0 Q917.9,103.6 917.9,98.0 Z" fill="#3a72c8"/><text x="925.5" y="102.9" font-size="8.5" font-weight="bold" fill="#fff" text-anchor="middle" font-family="Liberation Sans, sans-serif">40</text></g>
<g><path d="M965.9,48.2 Q973.8,46.2 981.7,48.2 L982.3,54.9 Q982.3,61.7 973.8,65.0 Q965.3,61.7 965.3,54.9 Z" fill="#fff"/><polygon points="966.3,48.8 968.2,47.8 970.0,48.8 971.9,47.8 973.8,48.8 975.7,47.8 977.5,48.8 979.4,47.8 981.3,48.8 981.3,51.6 966.3,51.6" fill="#e0554a"/><path d="M966.3,52.3 L981.3,52.3 L981.4,55.2 Q981.4,61.3 973.8,64.0 Q966.2,61.3 966.2,55.2 Z" fill="#3a72c8"/><text x="973.8" y="60.6" font-size="9.2" font-weight="bold" fill="#fff" text-anchor="middle" font-family="Liberation Sans, sans-serif">15</text></g>
<g><path d="M1011.6,115.6 Q1019.2,113.6 1026.9,115.6 L1027.5,122.0 Q1027.5,128.5 1019.2,131.7 Q1011.0,128.5 1011.0,122.0 Z" fill="#fff"/><polygon points="1012.0,116.2 1013.8,115.2 1015.6,116.2 1017.4,115.2 1019.2,116.2 1021.1,115.2 1022.9,116.2 1024.7,115.2 1026.5,116.2 1026.5,118.8 1012.0,118.8" fill="#e0554a"/><path d="M1012.0,119.5 L1026.5,119.5 L1026.6,122.3 Q1026.6,128.2 1019.2,130.7 Q1011.9,128.2 1011.9,122.3 Z" fill="#3a72c8"/><text x="1019.2" y="127.4" font-size="8.8" font-weight="bold" fill="#fff" text-anchor="middle" font-family="Liberation Sans, sans-serif">40</text></g>
<g transform="translate(240,183) scale(1.000,0.972)"><path d="M3,1 Q7,2.5 11.5,0.8 Q16,2.5 20,1 Q22.5,3 21.5,7 Q22.5,12 11.5,17.2 Q0.5,12 1.5,7 Q0.5,3 3,1 Z" fill="#fff" stroke="#555" stroke-width="1.2"/><text x="11.5" y="12.3" font-size="9" fill="#333" text-anchor="middle" font-family="Liberation Sans, sans-serif">101</text></g>
<g><path d="M582.6,240.6 Q589.5,238.6 596.4,240.6 L597.0,247.1 Q597.0,253.8 589.5,257.0 Q582.0,253.8 582.0,247.1 Z" fill="#fff"/><polygon points="583.0,241.2 584.6,240.2 586.3,241.2 587.9,240.2 589.5,241.2 591.1,240.2 592.8,241.2 594.4,240.2 596.0,241.2 596.0,243.9 583.0,243.9" fill="#e0554a"/><path d="M583.0,244.6 L596.0,244.6 L596.1,247.5 Q596.1,253.4 589.5,256.0 Q582.9,253.4 582.9,247.5 Z" fill="#3a72c8"/><text x="589.5" y="252.7" font-size="9.0" font-weight="bold" fill="#fff" text-anchor="middle" font-family="Liberation Sans, sans-serif">5</text></g>
<g><path d="M738.3,277.6 Q746.1,275.6 753.8,277.6 L754.4,284.1 Q754.4,290.8 746.1,294.0 Q737.7,290.8 737.7,284.1 Z" fill="#fff"/><polygon points="738.7,278.2 740.5,277.2 742.4,278.2 744.2,277.2 746.1,278.2 747.9,277.2 749.7,278.2 751.6,277.2 753.4,278.2 753.4,280.9 738.7,280.9" fill="#e0554a"/><path d="M738.7,281.6 L753.4,281.6 L753.5,284.5 Q753.5,290.4 746.1,293.0 Q738.6,290.4 738.6,284.5 Z" fill="#3a72c8"/><text x="746.1" y="289.7" font-size="9.0" font-weight="bold" fill="#fff" text-anchor="middle" font-family="Liberation Sans, sans-serif">10</text></g>
<g><path d="M652.6,295.6 Q663.0,293.6 673.4,295.6 L674.0,301.4 Q674.0,307.5 663.0,310.5 Q652.0,307.5 652.0,301.4 Z" fill="#fff"/><polygon points="653.0,296.2 655.0,295.2 657.0,296.2 659.0,295.2 661.0,296.2 663.0,295.2 665.0,296.2 667.0,295.2 669.0,296.2 671.0,295.2 673.0,296.2 673.0,298.5 653.0,298.5" fill="#e0554a"/><path d="M653.0,299.1 L673.0,299.1 L673.1,301.8 Q673.1,307.2 663.0,309.5 Q652.9,307.2 652.9,301.8 Z" fill="#3a72c8"/><text x="663.0" y="306.5" font-size="8.3" font-weight="bold" fill="#fff" text-anchor="middle" font-family="Liberation Sans, sans-serif" textLength="13.6" lengthAdjust="spacingAndGlyphs">605</text></g>
<g><path d="M630.6,315.6 Q640.0,313.6 649.4,315.6 L650.0,321.2 Q650.0,327.1 640.0,330.0 Q630.0,327.1 630.0,321.2 Z" fill="#fff"/><polygon points="631.0,316.2 632.8,315.2 634.6,316.2 636.4,315.2 638.2,316.2 640.0,315.2 641.8,316.2 643.6,315.2 645.4,316.2 647.2,315.2 649.0,316.2 649.0,318.3 631.0,318.3" fill="#e0554a"/><path d="M631.0,319.0 L649.0,319.0 L649.1,321.5 Q649.1,326.8 640.0,329.0 Q630.9,326.8 630.9,321.5 Z" fill="#3a72c8"/><text x="640.0" y="326.2" font-size="8.0" font-weight="bold" fill="#fff" text-anchor="middle" font-family="Liberation Sans, sans-serif" textLength="12.4" lengthAdjust="spacingAndGlyphs">110</text></g>
<g transform="translate(695,112.7)"><path d="M14.5,0 C6.5,0 0,6.3 0,14.2 C0,22 8.5,29 14.5,41.3 C20.5,29 29,22 29,14.2 C29,6.3 22.5,0 14.5,0 Z" fill="#ea4335"/><circle cx="14.5" cy="14.5" r="5.3" fill="#b3140f"/></g>
<defs><filter id="sh" x="-20%" y="-20%" width="140%" height="140%"><feDropShadow dx="0" dy="1" stdDeviation="1" flood-color="#000" flood-opacity="0.3"/></filter></defs>
<rect x="11" y="12" width="189" height="44.7" rx="2" fill="#fff" filter="url(#sh)"/>
<rect x="88.5" y="12" width="1" height="44.7" fill="#e6e6e6"/>
<text x="30.5" y="41.3" font-size="19.5" font-weight="bold" fill="#000" font-family="Liberation Sans, sans-serif" textLength="39.5" lengthAdjust="spacing">Map</text>
<text x="109" y="41.3" font-size="19.5" fill="#565656" font-family="Liberation Sans, sans-serif" textLength="72.3" lengthAdjust="spacing">Satellite</text>
<rect x="1225.8" y="12" width="45" height="45" rx="2" fill="#fff" filter="url(#sh)"/>
<path d="M1240,30 V24.8 H1245.2 M1253.8,24.8 H1259 V30 M1259,38 V43.2 H1253.8 M1245.2,43.2 H1240 V38" fill="none" stroke="#666" stroke-width="2.6"/>
<circle cx="1248.3" cy="190.4" r="22.5" fill="#fff" filter="url(#sh)"/>
<path d="M1243.5,182 L1248.3,177.5 L1253.1,182 M1256.5,185.6 L1261,190.4 L1256.5,195.2 M1253.1,198.8 L1248.3,203.3 L1243.5,198.8 M1240,195.2 L1235.5,190.4 L1240,185.6" fill="none" stroke="#666" stroke-width="2.4"/>
<rect x="1225.8" y="249" width="45" height="45" rx="2" fill="#fff" filter="url(#sh)"/>
<g fill="#fdbd2d" stroke="#d89c10" stroke-width="0.5"><circle cx="1248.3" cy="259.3" r="4.8"/><path d="M1241.5,265 H1255 L1258,279 L1255.5,279.5 L1253.5,272 L1253.5,288 H1249.5 L1249,279 H1247.5 L1247,288 H1243 L1243,272 L1241,279.5 L1238.5,279 Z"/></g>
<path d="M1245,265 L1248.3,270.5 L1251.6,265 Z" fill="#e2762a"/>
<g font-family="Liberation Sans, sans-serif" font-size="20.5" font-weight="bold" stroke="#e6f7fb" stroke-width="1.8" paint-order="stroke" stroke-linejoin="round"><text x="11" y="311.8" textLength="64" lengthAdjust="spacing"><tspan fill="#4285f4">G</tspan><tspan fill="#ea4335">o</tspan><tspan fill="#fbbc05">o</tspan><tspan fill="#4285f4">g</tspan><tspan fill="#34a853">l</tspan><tspan fill="#ea4335">e</tspan></text></g>
<rect x="854.8" y="305" width="428.2" height="16" fill="#f5f5f5" fill-opacity="0.8"/>
<g font-family="Liberation Sans, sans-serif" font-size="11" fill="#222"><text x="856.5" y="316.5" textLength="97.2" lengthAdjust="spacing">Keyboard shortcuts</text><text x="968" y="316.5" textLength="155.7" lengthAdjust="spacing">Map data ©2025 Google, INEGI</text><text x="1137.8" y="316.5" textLength="30.6" lengthAdjust="spacing">Terms</text><text x="1182.7" y="316.5" textLength="93" lengthAdjust="spacing">Report a map error</text></g>
<rect x="960" y="306" width="1" height="14" fill="#ddd"/><rect x="1130" y="306" width="1" height="14" fill="#ddd"/><rect x="1175.7" y="306" width="1" height="14" fill="#ddd"/>
</svg>


<div class="a" style="left:314px;top:877px;width:156px;height:20px;background:#2ecc87;border-radius:8px 8px 0 0"></div>

<!-- main scrollbars -->
<div class="a" style="left:280px;top:893px;width:1638px;height:16px;background:#fafafa"></div>
<div class="a" style="left:303.2px;top:897px;width:1568.7px;height:10.7px;background:#8a8a8a;border-radius:5.4px"></div>
<div class="a" style="left:1899.5px;top:72px;width:18.5px;height:837px;background:#fafafa"></div>
<div class="a" style="left:1904px;top:94.7px;width:11px;height:717.1px;background:#8a8a8a;border-radius:5.5px"></div>
<div class="a" style="left:265.2px;top:110px;width:10.8px;height:667.8px;background:#8a8a8a;border-radius:5.4px"></div>
<svg class="a" style="left:0;top:0" width="1918" height="909" viewBox="0 0 1918 909">
<g fill="#8a8a8a" stroke="#8a8a8a" stroke-width="1.6" stroke-linejoin="round">
<polygon points="270.5,78.9 276,87 265,87"/>
<polygon points="265,898 276,898 270.5,905.8"/>
<polygon points="1909.5,78.9 1915,87 1904,87"/>
<polygon points="1904,879 1915,879 1909.5,887"/>
<polygon points="294.2,897.8 294.2,909 287,903.4"/>
<polygon points="1885.8,897.8 1885.8,909 1893.3,903.4"/>
</g>
</svg>
</body></html>
